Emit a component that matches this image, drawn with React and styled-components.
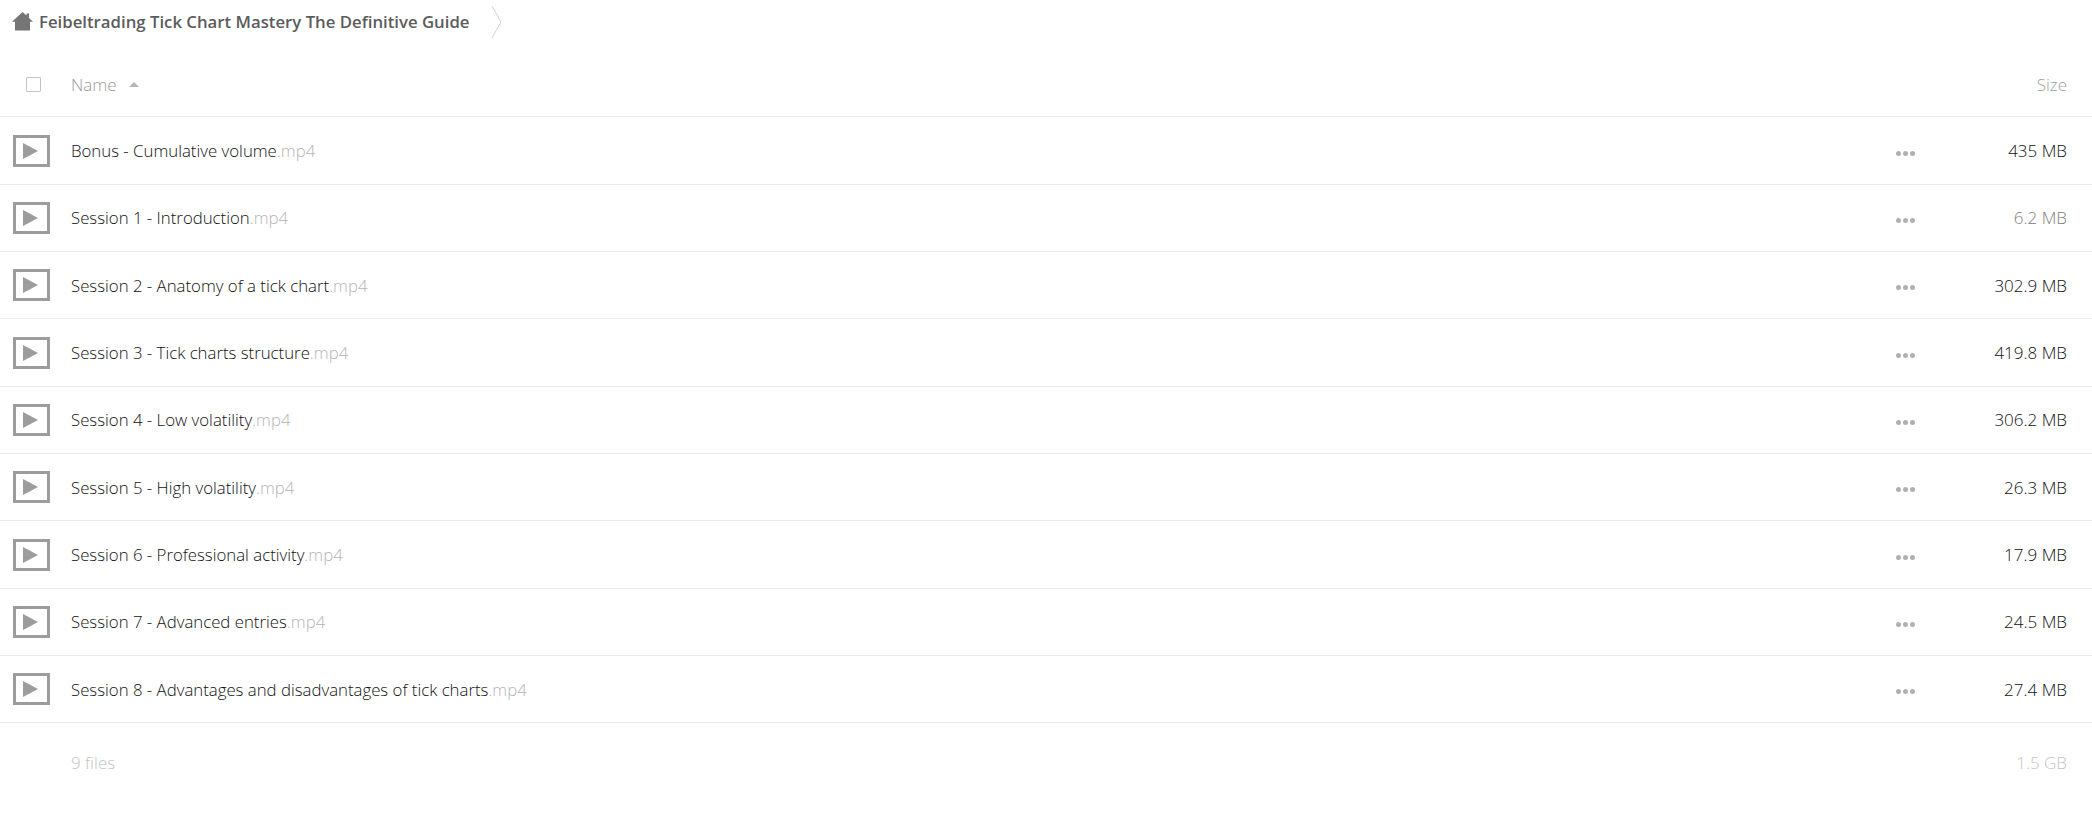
import React from 'react';
import styled, { createGlobalStyle } from 'styled-components';

const files = [
  { name: 'Bonus - Cumulative volume', size: '435 MB' },
  { name: 'Session 1 - Introduction', size: '6.2 MB', small: true },
  { name: 'Session 2 - Anatomy of a tick chart', size: '302.9 MB' },
  { name: 'Session 3 - Tick charts structure', size: '419.8 MB' },
  { name: 'Session 4 - Low volatility', size: '306.2 MB' },
  { name: 'Session 5 - High volatility', size: '26.3 MB' },
  { name: 'Session 6 - Professional activity', size: '17.9 MB' },
  { name: 'Session 7 - Advanced entries', size: '24.5 MB' },
  { name: 'Session 8 - Advantages and disadvantages of tick charts', size: '27.4 MB' },
];

const GlobalStyle = createGlobalStyle`
  html, body {
    margin: 0;
    padding: 0;
    background: #fff;
    font-family: "Open Sans", "Liberation Sans", sans-serif;
  }
`;

const Page = styled.div`
  width: 2092px;
  height: 836px;
  overflow: hidden;
  background: #fff;
`;

const Breadcrumb = styled.div`
  display: flex;
  align-items: center;
  height: 42px;
  padding-left: 12px;
`;

const Crumb = styled.span`
  margin-left: 6px;
  font-size: 16.75px;
  font-weight: 600;
  color: #5c5c5c;
  white-space: nowrap;
`;

const Chevron = styled.svg`
  display: block;
  width: 11px;
  height: 34px;
  margin: 2px 0 0 21px;
`;

const Row = styled.div`
  display: grid;
  grid-template-columns: 71px 1fr 24px 147px;
  align-items: center;
  height: ${({ $height }) => $height}px;
  padding-top: ${({ $top }) => $top || 0}px;
  box-sizing: border-box;
  border-bottom: ${({ $plain }) => ($plain ? 'none' : '1px solid #ebebeb')};
  padding-right: 25px;
`;

const CheckCell = styled.div`
  padding-left: 26px;
`;

const Checkbox = styled.div`
  width: 15px;
  height: 15px;
  box-sizing: border-box;
  border: 1px solid #c4c4c4;
  border-radius: 1px;
`;

const IconCell = styled.div`
  padding-left: 13px;
`;

const VideoIcon = styled.svg`
  display: block;
  width: 37px;
  height: 32px;
`;

const HeadLabel = styled.div`
  display: flex;
  align-items: center;
  font-size: 17px;
  font-weight: 300;
  color: #999;
`;

const SortArrow = styled.span`
  width: 0;
  height: 0;
  margin: 1px 0 0 12px;
  border-left: 5px solid transparent;
  border-right: 5px solid transparent;
  border-bottom: 5px solid #b5b5b5;
`;

const FileName = styled.div`
  font-size: 16.8px;
  font-weight: 300;
  color: #111;
  white-space: nowrap;
`;

const Extension = styled.span`
  color: #b4b4b4;
`;

const Dots = styled.div`
  display: flex;
  gap: 2px;
  margin-top: 5px;
`;

const Dot = styled.span`
  width: 5px;
  height: 5px;
  border-radius: 50%;
  background: #b0b0b0;
`;

const Size = styled.div`
  grid-column: 4;
  text-align: right;
  font-size: 17px;
  font-weight: 300;
  color: ${({ $color }) => $color};
  white-space: nowrap;
`;

const FooterLabel = styled.div`
  font-size: 17px;
  font-weight: 300;
  color: #c4c4c4;
`;

const HomeIcon = () => (
  <svg width="21" height="19" viewBox="0 0 21 19">
    <path fill="#757575" d="M10.5 0 L14.5 3.6 V1.5 H17 V5.9 L21 9.8 H18 V18.5 H3 V9.8 H0 Z" />
  </svg>
);

const App = () => (
  <Page>
    <GlobalStyle />
    <Breadcrumb>
      <HomeIcon />
      <Crumb>Feibeltrading Tick Chart Mastery The Definitive Guide</Crumb>
      <Chevron viewBox="0 0 11 34">
        <path d="M1 1 L10 17 L1 33" fill="none" stroke="#d4d4d4" strokeWidth="1" />
      </Chevron>
    </Breadcrumb>
    <Row $height={75.4} $top={10}>
      <CheckCell>
        <Checkbox />
      </CheckCell>
      <HeadLabel>
        Name
        <SortArrow />
      </HeadLabel>
      <Size $color="#a0a0a0">Size</Size>
    </Row>
    {files.map((file) => (
      <Row key={file.name} $height={67.33}>
        <IconCell>
          <VideoIcon viewBox="0 0 37 32">
            <rect x="1.5" y="1.5" width="34" height="29" fill="none" stroke="#9c9c9c" strokeWidth="3" />
            <path d="M10 8 L25 16 L10 24 Z" fill="#9c9c9c" />
          </VideoIcon>
        </IconCell>
        <FileName>
          {file.name}
          <Extension>.mp4</Extension>
        </FileName>
        <Dots>
          <Dot />
          <Dot />
          <Dot />
        </Dots>
        <Size $color={file.small ? '#808080' : '#111'}>{file.size}</Size>
      </Row>
    ))}
    <Row $height={78} $plain>
      <div />
      <FooterLabel>9 files</FooterLabel>
      <div />
      <Size $color="#c4c4c4">1.5 GB</Size>
    </Row>
  </Page>
);

export default App;
